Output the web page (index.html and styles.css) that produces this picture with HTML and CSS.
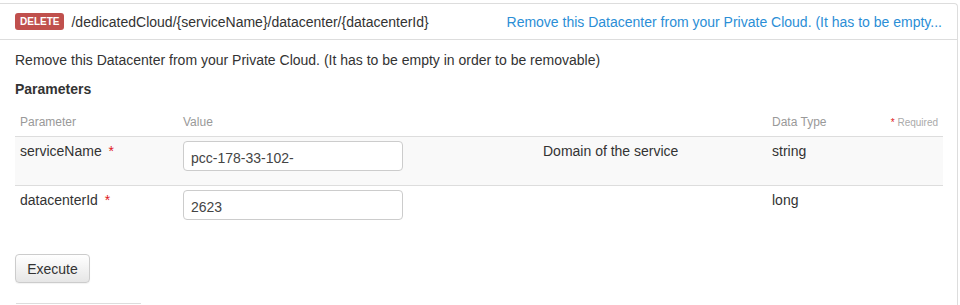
FILE: index.html
```html
<!DOCTYPE html>
<html lang="en">
<head>
  <meta charset="UTF-8">
  <title>DELETE /dedicatedCloud/{serviceName}/datacenter/{datacenterId}</title>
  <link rel="stylesheet" href="styles.css">
</head>
<body>
  <div class="operation">
    <div class="op-heading">
      <span class="verb">DELETE</span>
      <span class="path">/dedicatedCloud/{serviceName}/datacenter/{datacenterId}</span>
      <span class="summary">Remove this Datacenter from your Private Cloud. (It has to be empty...</span>
    </div>

    <div class="op-body">
      <p class="description">Remove this Datacenter from your Private Cloud. (It has to be empty in order to be removable)</p>
      <h4>Parameters</h4>

      <table class="params">
        <thead>
          <tr>
            <th class="col-name">Parameter</th>
            <th class="col-value">Value</th>
            <th class="col-desc"></th>
            <th class="col-type">Data Type</th>
            <th class="col-req"><span class="star">*</span> Required</th>
          </tr>
        </thead>
        <tbody>
          <tr class="odd">
            <td>serviceName <span class="star">*</span></td>
            <td><input type="text" value="pcc-178-33-102-"></td>
            <td>Domain of the service</td>
            <td>string</td>
            <td></td>
          </tr>
          <tr>
            <td>datacenterId <span class="star">*</span></td>
            <td><input type="text" value="2623"></td>
            <td></td>
            <td>long</td>
            <td></td>
          </tr>
        </tbody>
      </table>

      <button class="btn">Execute</button>
      <div class="response"></div>
    </div>
  </div>
</body>
</html>
```

FILE: styles.css
```css
body {
  margin: 0;
  font-family: "Liberation Sans", Arial, sans-serif;
  font-size: 14px;
  color: #333;
  background: #fff;
  overflow: hidden;
}

.operation {
  width: 957px;
  margin-top: 3px;
  border: 1px solid #ddd;
  border-left: none;
  border-bottom: none;
  border-radius: 0 4px 0 0;
}

.op-heading {
  display: flex;
  align-items: center;
  height: 35px;
  padding: 0 15px;
  border-bottom: 1px solid #ddd;
}

.verb {
  background: #c0504d;
  color: #fff;
  font-size: 10px;
  font-weight: bold;
  padding: 0 5px;
  height: 17px;
  line-height: 17px;
  border-radius: 3px;
  margin-right: 7px;
}

.path {
  flex: none;
}

.summary {
  margin-left: auto;
  color: #2b8ed6;
  white-space: nowrap;
}

.op-body {
  padding: 10px 15px 0;
}

.description {
  margin: 0;
  line-height: 20px;
}

h4 {
  margin: 9px 0 0;
  font-size: 14px;
  line-height: 20px;
}

.params {
  width: 928px;
  margin-top: 9px;
  border-collapse: collapse;
}

.params th {
  font-size: 12px;
  font-weight: normal;
  color: #999;
  text-align: left;
  height: 28px;
  padding: 0 5px;
  border-bottom: 1px solid #ddd;
}

.params th.col-req {
  text-align: right;
  font-size: 10px;
  color: #aaa;
}

.col-name { width: 153px; }
.col-value { width: 350px; }
.col-desc { width: 219px; }
.col-type { width: 103px; }

.params td {
  vertical-align: top;
  padding: 4px 5px 0;
  height: 44px;
  line-height: 20px;
  border-bottom: 1px solid #ddd;
}

.params tbody tr:last-child td {
  border-bottom: none;
}

.params tr.odd td {
  background: #f9f9f9;
}

.star {
  color: #e0191d;
  margin-left: 3px;
}

.params input {
  box-sizing: border-box;
  width: 220px;
  height: 30px;
  padding: 4px 7px 0;
  border: 1px solid #ccc;
  border-radius: 4px;
  background: #fff;
  font-family: inherit;
  font-size: 14px;
  color: #444;
}

.btn {
  display: block;
  margin-top: 20px;
  width: 75px;
  height: 29px;
  padding: 0;
  border: 1px solid #ccc;
  border-radius: 4px;
  background: linear-gradient(#fff, #e6e6e6);
  box-shadow: 0 1px 1px rgba(0, 0, 0, 0.05);
  font-family: inherit;
  font-size: 14px;
  color: #333;
}

.response {
  width: 125px;
  margin: 20px 0 0 1px;
  border-top: 1px solid #ddd;
  height: 20px;
}
```
